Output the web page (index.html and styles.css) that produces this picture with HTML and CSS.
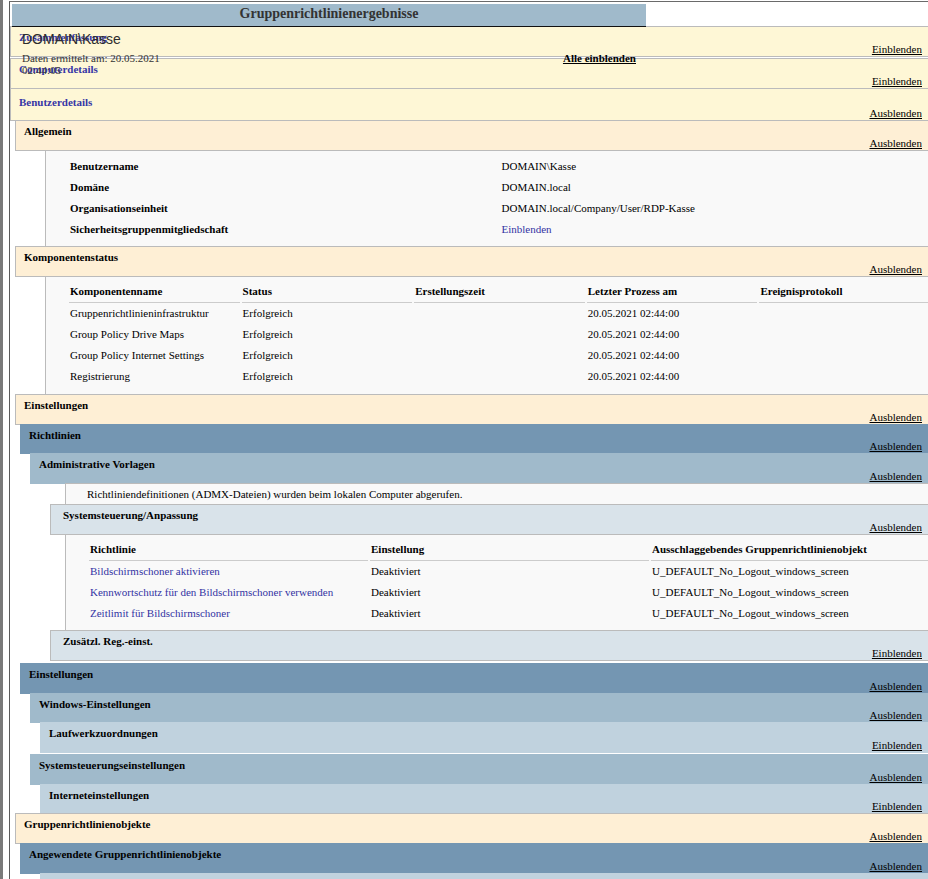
FILE: index.html
```html
<!DOCTYPE html>
<html lang="de">
<head>
<meta charset="utf-8">
<title>Gruppenrichtlinienergebnisse</title>
<link rel="stylesheet" href="styles.css">
</head>
<body>
<div class="frame">
  <div class="report">
    <div class="title">
      <div class="rsopheader">Gruppenrichtlinienergebnisse</div>
      <div class="rsopname">DOMAIN\Kasse</div>
      <div class="stamp">
        <div class="dtstamp">Daten ermittelt am: 20.05.2021<br>02:44:05</div>
        <div class="showhide">Alle einblenden</div>
      </div>
    </div>

    <div class="hdr h0 zus"><span class="st">Zusammenfassung</span><a class="exp">Einblenden</a></div>
    <div class="hdr h0"><span class="st">Computerdetails</span><a class="exp">Einblenden</a></div>
    <div class="hdr h0 tall"><span class="st">Benutzerdetails</span><a class="exp">Ausblenden</a></div>

    <div class="hdr h1"><span class="st">Allgemein</span><a class="exp">Ausblenden</a></div>
    <div class="box b1">
      <table class="tbl">
        <tr><td class="lbl">Benutzername</td><td>DOMAIN\Kasse</td></tr>
        <tr><td class="lbl">Domäne</td><td>DOMAIN.local</td></tr>
        <tr><td class="lbl">Organisationseinheit</td><td>DOMAIN.local/Company/User/RDP-Kasse</td></tr>
        <tr><td class="lbl">Sicherheitsgruppenmitgliedschaft</td><td><a class="lnk">Einblenden</a></td></tr>
      </table>
    </div>

    <div class="hdr h1"><span class="st">Komponentenstatus</span><a class="exp">Ausblenden</a></div>
    <div class="box b1 comp">
      <table class="tbl">
        <tr><th>Komponentenname</th><th>Status</th><th>Erstellungszeit</th><th>Letzter Prozess am</th><th>Ereignisprotokoll</th></tr>
        <tr><td>Gruppenrichtlinieninfrastruktur</td><td>Erfolgreich</td><td></td><td>20.05.2021 02:44:00</td><td></td></tr>
        <tr><td>Group Policy Drive Maps</td><td>Erfolgreich</td><td></td><td>20.05.2021 02:44:00</td><td></td></tr>
        <tr><td>Group Policy Internet Settings</td><td>Erfolgreich</td><td></td><td>20.05.2021 02:44:00</td><td></td></tr>
        <tr><td>Registrierung</td><td>Erfolgreich</td><td></td><td>20.05.2021 02:44:00</td><td></td></tr>
      </table>
    </div>

    <div class="hdr h1"><span class="st">Einstellungen</span><a class="exp">Ausblenden</a></div>
    <div class="hdr h2"><span class="st">Richtlinien</span><a class="exp">Ausblenden</a></div>
    <div class="hdr h3"><span class="st">Administrative Vorlagen</span><a class="exp">Ausblenden</a></div>
    <div class="box b2 note">Richtliniendefinitionen (ADMX-Dateien) wurden beim lokalen Computer abgerufen.</div>
    <div class="hdr h5"><span class="st">Systemsteuerung/Anpassung</span><a class="exp">Ausblenden</a></div>
    <div class="box b2 tight">
      <table class="tbl">
        <tr><th>Richtlinie</th><th>Einstellung</th><th>Ausschlaggebendes Gruppenrichtlinienobjekt</th></tr>
        <tr><td><a class="lnk">Bildschirmschoner aktivieren</a></td><td>Deaktiviert</td><td>U_DEFAULT_No_Logout_windows_screen</td></tr>
        <tr><td><a class="lnk">Kennwortschutz für den Bildschirmschoner verwenden</a></td><td>Deaktiviert</td><td>U_DEFAULT_No_Logout_windows_screen</td></tr>
        <tr><td><a class="lnk">Zeitlimit für Bildschirmschoner</a></td><td>Deaktiviert</td><td>U_DEFAULT_No_Logout_windows_screen</td></tr>
      </table>
    </div>
    <div class="hdr h5 gap3"><span class="st">Zusätzl. Reg.-einst.</span><a class="exp">Einblenden</a></div>

    <div class="hdr h2"><span class="st">Einstellungen</span><a class="exp">Ausblenden</a></div>
    <div class="hdr h3"><span class="st">Windows-Einstellungen</span><a class="exp">Ausblenden</a></div>
    <div class="hdr h4 gap2"><span class="st">Laufwerkzuordnungen</span><a class="exp">Einblenden</a></div>
    <div class="hdr h3"><span class="st">Systemsteuerungseinstellungen</span><a class="exp">Ausblenden</a></div>
    <div class="hdr h4"><span class="st">Interneteinstellungen</span><a class="exp">Einblenden</a></div>

    <div class="hdr h1"><span class="st">Gruppenrichtlinienobjekte</span><a class="exp">Ausblenden</a></div>
    <div class="hdr h2"><span class="st">Angewendete Gruppenrichtlinienobjekte</span><a class="exp">Ausblenden</a></div>
    <div class="hdr h4"><span class="st"></span></div>
  </div>
</div>
</body>
</html>
```

FILE: styles.css
```css
html, body {
  margin: 0;
  padding: 0;
  background: #ffffff;
  overflow: hidden;
}

body {
  font-family: "Liberation Serif", "Times New Roman", serif;
  font-size: 11px;
  color: #000000;
}

.frame {
  border-left: 3px solid #7a7a7a;
  padding: 1px 0 0 6px;
  min-height: 878px;
}

.report {
  border-top: 1px solid #6a6a6a;
  border-left: 1px solid #5a5a5a;
  margin-right: -4px;
  min-height: 880px;
}

/* ---------- title block (overflows onto the first sections) ---------- */
.title {
  position: relative;
  z-index: 5;
  width: 634px;
  height: 22px;
  margin: 2px 0 0 2px;
}

.rsopheader {
  box-sizing: border-box;
  height: 23px;
  background: #a0bacb;
  border-bottom: 1px solid #111111;
  color: #333333;
  font-size: 14px;
  font-weight: bold;
  line-height: 20px;
  text-align: center;
}

.rsopname {
  margin-top: 4px;
  padding-left: 10px;
  font-family: "Liberation Sans", Arial, sans-serif;
  font-size: 14px;
  line-height: 16px;
  color: #2e2e2e;
}

.stamp {
  display: flex;
  margin-top: 5px;
  line-height: 12px;
  color: #333333;
}

.dtstamp {
  width: 190px;
  box-sizing: border-box;
  padding-left: 10px;
}

.showhide {
  flex: 1;
  text-align: right;
  padding-right: 10px;
  font-weight: bold;
  text-decoration: underline;
  color: #000000;
}

/* ---------- section headers ---------- */
.hdr {
  position: relative;
  box-sizing: border-box;
  height: 30.8px;
  border: 1px solid #bbbbbb;
  border-right: none;
  margin-bottom: -1px;
  padding: 4px 0 0 8px;
  font-weight: bold;
  line-height: 12px;
  color: #000000;
}

.exp {
  position: absolute;
  right: 10px;
  bottom: 1px;
  font-weight: normal;
  line-height: 12px;
  color: #000000;
  text-decoration: underline;
}

.h0 {
  margin-left: 0;
  background: #fef7d6;
  color: #3636a6;
}

.h0.zus {
  margin-bottom: 1.2px;
}

.h0.tall {
  height: 33.4px;
  padding-top: 7px;
}

.h1 {
  margin-left: 5px;
  background: #feefd5;
}

.h2 {
  margin-left: 10px;
  background: #7496b2;
  border-color: #7496b2;
}

.h3 {
  margin-left: 20px;
  background: #a0bacb;
  border-color: #a0bacb;
}

.h4 {
  margin-left: 30px;
  background: #c0d2de;
  border-color: #c0d2de;
}

.h5 {
  margin-left: 40px;
  padding-left: 12px;
  background: #d9e3ea;
}

.gap3 {
  margin-bottom: 2px;
}

.gap2 {
  margin-bottom: 0.6px;
}

/* ---------- content boxes ---------- */
.box {
  position: relative;
  background: #f9f9f9;
  border: 1px solid #bbbbbb;
  border-right: none;
  margin-bottom: -1px;
  padding: 5px 0 6px 21px;
}

.b1 {
  margin-left: 35px;
}

.b2 {
  margin-left: 55px;
}

.box.comp {
  padding-top: 4px;
  padding-bottom: 7px;
}

.box.tight {
  padding-top: 4px;
}

.box.note {
  padding: 4px 0 4px 21px;
  line-height: 12px;
}

.tbl {
  width: 100%;
  table-layout: fixed;
  border-collapse: separate;
  border-spacing: 2px 0;
  font-size: 11px;
}

.tbl th,
.tbl td {
  padding: 0 10px 0 1px;
  text-align: left;
  vertical-align: top;
  line-height: 21px;
  white-space: nowrap;
  overflow: visible;
}

.tbl th {
  font-weight: bold;
  border-bottom: 1px solid #cccccc;
}

.tbl td.lbl {
  font-weight: bold;
}

.lnk {
  color: #3333a3;
  text-decoration: none;
}
```
